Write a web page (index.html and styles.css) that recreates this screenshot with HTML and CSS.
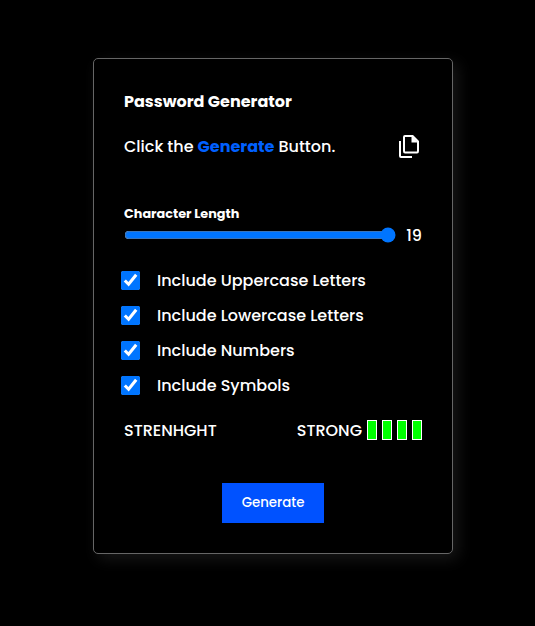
FILE: index.html
```html
<!DOCTYPE html>
<html lang="en">
<head>
<meta charset="utf-8">
<title>Password Generator</title>
<link rel="stylesheet" href="styles.css">
</head>
<body>
<main class="card">
  <h1 class="title">Password Generator</h1>
  <div class="output">
    <p class="hint">Click the <b class="accent">Generate</b> Button.</p>
    <svg class="copy" width="24" height="24" viewBox="0 0 24 24" fill="none" stroke="#fff" stroke-width="2">
      <path d="M8 2h7.6L21 7.4V17q0 1.5-1 1.5H8q-1 0-1-1.5V3q0-1 1-1z"/>
      <path d="M14.5 2v6.5H21L15 2z" fill="#fff" stroke="none"/>
      <path d="M3 7v15q0 1 1 1h11"/>
    </svg>
  </div>
  <label class="length-label" for="length">Character Length</label>
  <div class="length">
    <input class="slider" id="length" type="range" min="1" max="19" value="19">
    <span>19</span>
  </div>
  <div class="options">
    <label class="option"><input type="checkbox" checked>Include Uppercase Letters</label>
    <label class="option"><input type="checkbox" checked>Include Lowercase Letters</label>
    <label class="option"><input type="checkbox" checked>Include Numbers</label>
    <label class="option"><input type="checkbox" checked>Include Symbols</label>
  </div>
  <div class="strength">
    <span>STRENHGHT</span>
    <div class="meter"><span>STRONG</span><i class="bar"></i><i class="bar"></i><i class="bar"></i><i class="bar"></i></div>
  </div>
  <button class="generate">Generate</button>
</main>
</body>
</html>
```
FILE: styles.css
```css
* { box-sizing: border-box; }
body {
  margin: 0;
  min-height: 100vh;
  padding: 58px 0 0 93px;
  background: #000;
  color: #fff;
  font: 500 16px/24px Poppins, Inter, sans-serif;
  white-space: nowrap;
}
.card {
  width: 360px;
  height: 496px;
  padding: 31px 30px 29px;
  border: 1px solid #666;
  border-radius: 5px;
  background: #000;
  box-shadow: 5px 5px 15px #171717;
  display: flex;
  flex-direction: column;
}
.title { margin: 0; font-size: 16px; font-weight: 700; line-height: 24px; }
.output { display: flex; justify-content: space-between; align-items: center; height: 26px; margin-top: 20px; }
.hint { margin: 0; word-spacing: -0.1px; }
.accent { color: #0060ff; font-weight: 700; }
.copy { margin: 0 1px 2px 0; }
.length-label { margin-top: 44px; font-size: 12.8px; font-weight: 700; line-height: 20px; }
.length { display: flex; align-items: center; justify-content: space-between; height: 24px; }
.slider { width: 272px; height: 16px; margin: 0 0 2px; accent-color: #0075ff; }
.options { display: flex; flex-direction: column; gap: 11px; margin-top: 21px; }
.option { display: flex; align-items: center; height: 24px; margin-left: -3px; gap: 17px; }
.option input { width: 19px; height: 19px; margin: 0 0 1px; accent-color: #0075ff; }
.strength { display: flex; justify-content: space-between; align-items: center; margin-top: 21px; height: 24px; }
.meter { display: flex; align-items: center; gap: 5px; }
.bar { width: 10px; height: 20px; margin-bottom: 2px; background: #0f0; border: 1px solid #fff; }
.generate {
  align-self: center;
  flex: none;
  width: 102px;
  height: 40px;
  margin-top: 40px;
  padding: 0;
  border: 0;
  background: #0052ff;
  color: #fff;
  font: 500 13.333px Poppins, Inter, sans-serif;
}
```
